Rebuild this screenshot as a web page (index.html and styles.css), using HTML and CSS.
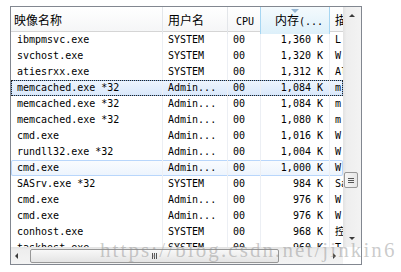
FILE: index.html
```html
<!DOCTYPE html>
<html lang="zh-CN">
<head>
  <meta charset="UTF-8" />
  <meta name="viewport" content="width=device-width, initial-scale=1" />
  <title>任务管理器 - 进程</title>
  <link rel="stylesheet" href="styles.css">
</head>
<body>
  <div class="page">
    <div class="frame">
      <div class="list">
        <div class="head">
          <div class="hc first">映像名称</div>
          <div class="hc">用户名</div>
          <div class="hc cpu"><span class="mono">CPU</span></div>
          <div class="hc sorted"><span class="arrow"></span>内存<span class="mono">(...</span></div>
          <div class="hc last">描</div>
        </div>

        <div class="row"><div class="c name">ibmpmsvc.exe</div><div class="c">SYSTEM</div><div class="c">00</div><div class="c mem">1,360 K</div><div class="c desc">L</div></div>
        <div class="row"><div class="c name">svchost.exe</div><div class="c">SYSTEM</div><div class="c">00</div><div class="c mem">1,320 K</div><div class="c desc">W</div></div>
        <div class="row"><div class="c name">atiesrxx.exe</div><div class="c">SYSTEM</div><div class="c">00</div><div class="c mem">1,312 K</div><div class="c desc">Al</div></div>
        <div class="row selected"><div class="c name">memcached.exe *32</div><div class="c">Admin...</div><div class="c">00</div><div class="c mem">1,084 K</div><div class="c desc">m</div></div>
        <div class="row"><div class="c name">memcached.exe *32</div><div class="c">Admin...</div><div class="c">00</div><div class="c mem">1,084 K</div><div class="c desc">m</div></div>
        <div class="row"><div class="c name">memcached.exe *32</div><div class="c">Admin...</div><div class="c">00</div><div class="c mem">1,080 K</div><div class="c desc">m</div></div>
        <div class="row"><div class="c name">cmd.exe</div><div class="c">Admin...</div><div class="c">00</div><div class="c mem">1,016 K</div><div class="c desc">W</div></div>
        <div class="row"><div class="c name">rundll32.exe *32</div><div class="c">Admin...</div><div class="c">00</div><div class="c mem">1,004 K</div><div class="c desc">W</div></div>
        <div class="row hover"><div class="c name">cmd.exe</div><div class="c">Admin...</div><div class="c">00</div><div class="c mem">1,000 K</div><div class="c desc">W</div></div>
        <div class="row"><div class="c name">SASrv.exe *32</div><div class="c">SYSTEM</div><div class="c">00</div><div class="c mem">984 K</div><div class="c desc">Sa</div></div>
        <div class="row"><div class="c name">cmd.exe</div><div class="c">Admin...</div><div class="c">00</div><div class="c mem">976 K</div><div class="c desc">W</div></div>
        <div class="row"><div class="c name">cmd.exe</div><div class="c">Admin...</div><div class="c">00</div><div class="c mem">976 K</div><div class="c desc">W</div></div>
        <div class="row"><div class="c name">conhost.exe</div><div class="c">SYSTEM</div><div class="c">00</div><div class="c mem">968 K</div><div class="c desc">控</div></div>
        <div class="row"><div class="c name">taskhost.exe</div><div class="c">SYSTEM</div><div class="c">00</div><div class="c mem">960 K</div><div class="c desc">T</div></div>
      </div>

      <div class="vbar">
        <div class="btn"><span class="tri up"></span></div>
        <div class="track">
          <div class="vthumb"><span class="grip-h"></span></div>
        </div>
        <div class="btn"><span class="tri down"></span></div>
      </div>

      <div class="hbar">
        <div class="hbtn left"><span class="tri lt"></span></div>
        <div class="hthumb"><span class="grip-v"></span></div>
        <div class="hbtn right"><span class="tri rt"></span></div>
      </div>

      <div class="corner"></div>
    </div>

    <div class="watermark">https://blog.csdn.net/jinkin6</div>
  </div>
</body>
</html>
```
FILE: styles.css
```css
body {
  margin: 0;
  background: #fff;
  color: #000;
  font-family: "DejaVu Sans Mono", "Liberation Mono", monospace;
  font-size: 10px;
}

.page {
  position: relative;
  padding: 6px 0 0 10px;
}

.frame {
  display: grid;
  grid-template-columns: 332px 18px;
  grid-template-rows: 240px 17px;
  width: 350px;
  border: 1px solid #828790;
}

.list {
  overflow: hidden;
}

/* header */
.head {
  display: grid;
  grid-template-columns: 152px 65px 33px 69px 13px;
  height: 24px;
  border-bottom: 1px solid #d5d5d5;
  background: linear-gradient(#ffffff, #f5f6f7);
}

.hc {
  position: relative;
  border-right: 1px solid #e3e6ea;
  padding-left: 5px;
  font-family: "Noto Sans CJK SC", sans-serif;
  font-size: 12px;
  line-height: 25px;
  white-space: nowrap;
  overflow: hidden;
}

.hc.first {
  padding-left: 3px;
}

.hc.cpu {
  padding-left: 8px;
}

.hc .mono {
  font-family: "DejaVu Sans Mono", monospace;
  font-size: 10px;
}

.hc.sorted {
  text-align: right;
  padding: 0 6px 0 0;
  background: linear-gradient(#f4fafd, #ddf0fa);
  border-right-color: #a6d6f2;
  box-shadow: -1px 0 0 #a6d6f2;
  overflow: visible;
}

.hc.sorted .arrow {
  position: absolute;
  top: 2px;
  left: 50%;
  margin-left: -4px;
  border-left: 4px solid transparent;
  border-right: 4px solid transparent;
  border-top: 4px solid #95b5d2;
}

.hc.last {
  border-right: none;
  padding-left: 5px;
}

/* rows */
.row {
  display: grid;
  grid-template-columns: 152px 65px 33px 69px 13px;
  height: 16px;
  line-height: 16px;
}

.c {
  border-right: 1px solid #eceff4;
  padding-left: 5px;
  white-space: nowrap;
  overflow: hidden;
}

.c.name {
  padding-left: 6px;
}

.c.mem {
  text-align: right;
  padding: 0 6px 0 0;
}

.c.desc {
  border-right: none;
  padding-left: 5px;
}

.row.selected {
  background: linear-gradient(#eef5fe, #d9e8fb);
  box-shadow: inset 0 0 0 1px #8db4e3;
  outline: 1px dotted #222;
  outline-offset: -1px;
}

.row.hover {
  border-radius: 2px;
  background: linear-gradient(#fafcfe, #ecf4fd);
  box-shadow: inset 0 0 0 1px #b8d6fb;
}

/* scrollbars */
.vbar {
  display: flex;
  flex-direction: column;
  background: linear-gradient(to right, #e2e2e2, #eeeeee 20%, #f3f3f3);
}

.btn {
  height: 17px;
  display: flex;
  align-items: center;
  justify-content: center;
  padding-right: 1px;
}

.track {
  flex: 1;
}

.vthumb {
  margin: 148px 3px 0 1px;
  height: 14px;
  border: 1px solid #979797;
  border-radius: 2px;
  background: linear-gradient(to right, #f6f6f6, #e6e6e6);
  display: flex;
  align-items: center;
  justify-content: center;
}

.grip-h {
  width: 6px;
  height: 5px;
  background: repeating-linear-gradient(#555 0 1px, transparent 1px 2px);
}

.hbar {
  display: flex;
  background: linear-gradient(#e2e2e2, #eeeeee 20%, #f3f3f3);
}

.hbtn {
  width: 17px;
  display: flex;
  align-items: center;
}

.hbtn.left {
  padding-left: 4px;
  width: 13px;
}

.hbtn.right {
  margin-left: auto;
  justify-content: center;
}

.hthumb {
  width: 247px;
  height: 12px;
  margin: 2px 0 1px 2px;
  border: 1px solid #979797;
  border-radius: 2px;
  background: linear-gradient(#f8f8f8, #e4e4e4);
  display: flex;
  align-items: center;
  justify-content: center;
}

.grip-v {
  width: 5px;
  height: 6px;
  background: repeating-linear-gradient(to right, #555 0 1px, transparent 1px 2px);
}

.corner {
  background: #fff;
}

.tri {
  width: 0;
  height: 0;
}

.tri.up {
  border-left: 3px solid transparent;
  border-right: 3px solid transparent;
  border-bottom: 3px solid #3a3a3a;
}

.tri.down {
  border-left: 3px solid transparent;
  border-right: 3px solid transparent;
  border-top: 3px solid #3a3a3a;
}

.tri.lt {
  border-top: 3px solid transparent;
  border-bottom: 3px solid transparent;
  border-right: 3px solid #3a3a3a;
}

.tri.rt {
  border-top: 3px solid transparent;
  border-bottom: 3px solid transparent;
  border-left: 3px solid #3a3a3a;
}

/* blog watermark over the bottom */
.watermark {
  position: absolute;
  left: 100px;
  top: 240px;
  font-family: "Liberation Serif", serif;
  font-size: 21px;
  line-height: 21px;
  letter-spacing: 2.1px;
  color: rgba(140, 140, 140, 0.45);
  white-space: nowrap;
}
```
